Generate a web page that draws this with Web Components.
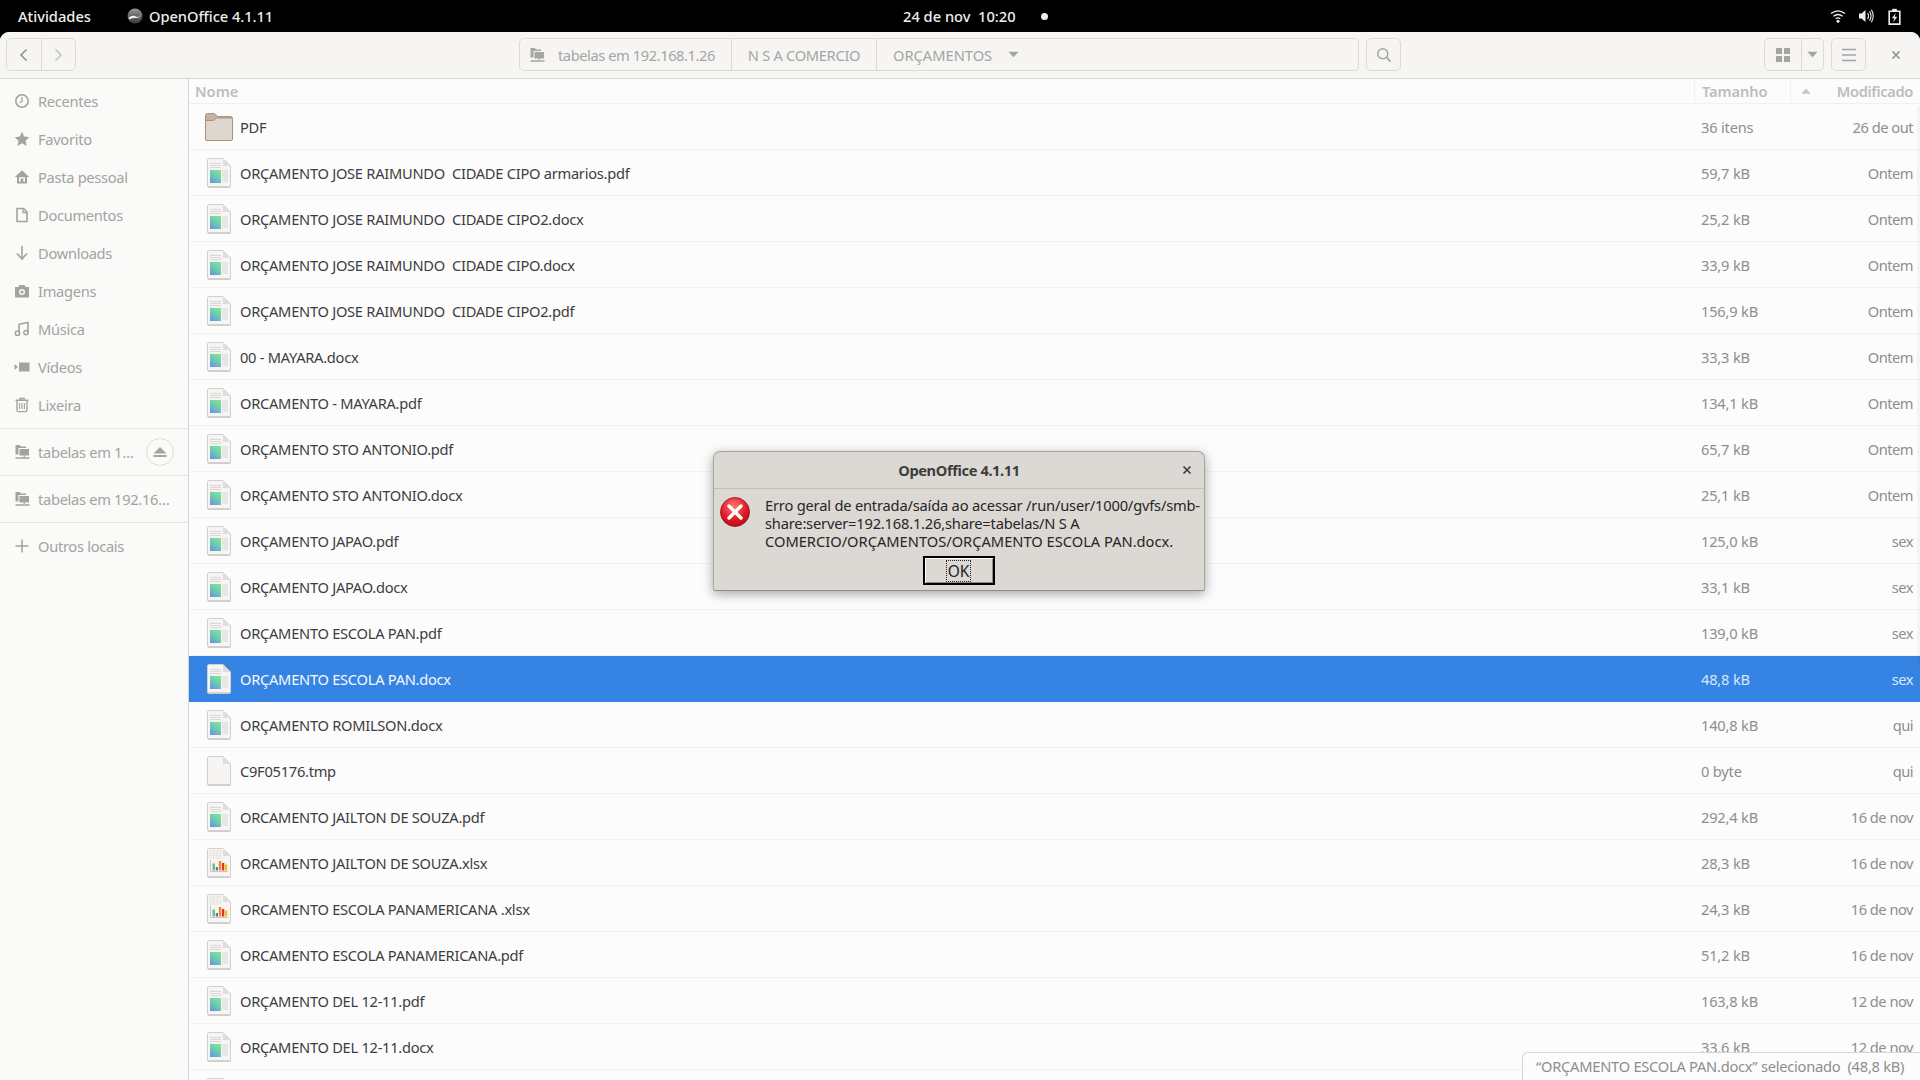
<!DOCTYPE html>
<html lang="pt-BR">
<head>
<meta charset="utf-8">
<title>Arquivos</title>
<style>
  html, body { margin: 0; height: 100%; overflow: hidden; background: #000; }
  body { display: flex; flex-direction: column; font-family: "Noto Sans", "Open Sans", sans-serif; font-size: 14.67px; }
  .tight { letter-spacing: -.19px; }
</style>
</head>
<body>
<top-bar></top-bar>
<files-window>
  <files-header slot="header"></files-header>
  <places-sidebar slot="side"></places-sidebar>
  <file-list slot="main"></file-list>
  <status-pill slot="over">“ORÇAMENTO ESCOLA PAN.docx” selecionado  (48,8 kB)</status-pill>
  <error-dialog slot="over" heading="OpenOffice 4.1.11"><span class="tight">Erro geral de entrada/saída ao acessar /run/user/1000/gvfs/smb-</span><br><span class="tight">share:server=192.168.1.26,share=tabelas/N S A</span><br>COMERCIO/ORÇAMENTOS/ORÇAMENTO ESCOLA PAN.docx.</error-dialog>
</files-window>

<script>
// symbolic icons, 16x16, painted with currentColor
const ICONS = {
  recent: '<circle cx="8" cy="8" r="6.2" fill="none" stroke="currentColor" stroke-width="1.6"/><path d="M8 4v4.4l-2.6 1.4" fill="none" stroke="currentColor" stroke-width="1.3"/>',
  star: '<path d="M8 .8l2.2 4.8 5.2.6-3.9 3.5 1.1 5.2L8 12.3l-4.6 2.6 1.1-5.2L.6 6.2l5.2-.6z" fill="currentColor"/>',
  home: '<path d="M8 1.2L.8 8h2.2v6.5h10V8h2.2zM5 8.2h6v4.6H9.4V9.6H6.6v3.2H5z" fill="currentColor" fill-rule="evenodd"/>',
  doc: '<path d="M3 1.5h6.5l3.5 3.5v9.5H3z" fill="none" stroke="currentColor" stroke-width="1.6"/><path d="M9 1.5v4h4" fill="none" stroke="currentColor" stroke-width="1.3"/>',
  down: '<path d="M8 1v12M3 8.5L8 14l5-5.5" fill="none" stroke="currentColor" stroke-width="1.6"/>',
  camera: '<path d="M1 4h3.4l1-2h5.2l1 2H15v10.5H1zM8 6a3 3 0 100 6 3 3 0 000-6z" fill="currentColor" fill-rule="evenodd"/><circle cx="8" cy="9" r="1.6" fill="currentColor"/>',
  music: '<path d="M5 3.2L14 1.5v10.2" fill="none" stroke="currentColor" stroke-width="1.6"/><path d="M5 3v9" stroke="currentColor" stroke-width="1.6"/><circle cx="3.5" cy="12.2" r="2.2" fill="none" stroke="currentColor" stroke-width="1.5"/><circle cx="12" cy="11.6" r="2.2" fill="none" stroke="currentColor" stroke-width="1.5"/>',
  video: '<path d="M5 3.5h10.5v9H5zM.5 5l3.4 3-3.4 3z" fill="currentColor"/>',
  trash: '<path d="M1.5 3.2h13M3 3.5v9.5q0 1.6 1.6 1.6h6.8q1.6 0 1.6-1.6V3.5M5 1.5h6" fill="none" stroke="currentColor" stroke-width="1.4"/><path d="M5.6 6v6M8 6v6M10.4 6v6" stroke="currentColor" stroke-width="1.1"/>',
  network: '<path d="M1.5 1h4.3l1.2 1.5h5V4H4.5v6.5h-3z" fill="currentColor"/><path d="M5.5 5H15v6.5H5.5z" fill="currentColor"/><path d="M9.6 11.5h1.3V13H9.6zM1.5 13.2h14v1.6h-14z" fill="currentColor"/>',
  plus: '<path d="M8 1.5v13M1.5 8h13" stroke="currentColor" stroke-width="1.5"/>',
  back: '<path d="M10.5 2.5L5 8l5.5 5.5" fill="none" stroke="currentColor" stroke-width="1.5"/>',
  forward: '<path d="M5.5 2.5L11 8l-5.5 5.5" fill="none" stroke="currentColor" stroke-width="1.5"/>',
  search: '<circle cx="6.8" cy="6.8" r="5" fill="none" stroke="currentColor" stroke-width="1.5"/><path d="M10.4 10.4l4.2 4.2" stroke="currentColor" stroke-width="1.7"/>',
  grid: '<path d="M1 1h6v6H1zM9 1h6v6H9zM1 9h6v6H1zM9 9h6v6H9z" fill="currentColor"/>',
  menu: '<path d="M1 2.5h14M1 8h14M1 13.5h14" stroke="currentColor" stroke-width="1.6"/>',
  caret: '<path d="M2.5 5h11L8 11z" fill="currentColor"/>',
  caretUp: '<path d="M2.5 11h11L8 5z" fill="currentColor"/>',
  close: '<path d="M4 4l8 8M12 4l-8 8" stroke="currentColor" stroke-width="1.9"/>',
  eject: '<path d="M8 3l6.5 6.5h-13zM1.5 11h13v2h-13z" fill="currentColor"/>',
  wifi: '<path d="M1 5.6q7-5.4 14 0M3.4 8.2q4.6-3.4 9.2 0M5.7 10.6q2.3-1.5 4.6 0" fill="none" stroke="currentColor" stroke-width="1.3"/><circle cx="8" cy="13.2" r="1.5" fill="currentColor"/>',
  volume: '<path d="M1 5.5h2.5L7.5 2v12l-4-3.5H1z" fill="currentColor"/><path d="M9.7 5q1.6 3 0 6M11.6 3.2q2.8 4.8 0 9.6M13.4 1.8q3.6 6.2 0 12.4" fill="none" stroke="currentColor" stroke-width="1.1"/>',
  battery: '<path d="M3 3h10v12.2H3z" fill="none" stroke="currentColor" stroke-width="1.5"/><path d="M5.8 .8h4.4V3H5.8z" fill="currentColor"/><path d="M9.2 4.6L5.5 9.6h2.3l-1 3.8 3.800-5.200H8.2z" fill="currentColor"/>'
};
const icon = (name, size = 16) =>
  `<svg width="${size}" height="${size}" viewBox="0 0 16 16" aria-hidden="true">${ICONS[name]}</svg>`;

// full colour file thumbnails
const PAGE = `<path d="M1.5.5H16L23.5 8v20a1.5 1.5 0 01-1.5 1.500H2A1.5 1.5 0 01.5 28V2A1.5 1.5 0 011.5.5z" fill="#f6f5f4" stroke="#d3d0ca"/><path d="M1 28.800h22" stroke="#c8c5bf"/><path d="M16 .5L23.5 8H16z" fill="#deddda"/>`;
let gradId = 0;
const fileIcon = (type) => {
  if (type === 'folder') {
    return `<svg width="28" height="28" viewBox="0 0 28 28" aria-hidden="true">
      <path d="M.5 26V2.5A2 2 0 012.5.5h7l3 3h13a2 2 0 012 2V26a1.500 1.500 0 01-1.500 1.500H2A1.500 1.500 0 01.5 26z" fill="#c4b2a2" stroke="#a8917f"/>
      <path d="M.5 7.500h8l3-2.500h14.500a1.500 1.500 0 011.500 1.500V26a1.500 1.500 0 01-1.500 1.500H2A1.500 1.500 0 01.5 26z" fill="#dfd6cd" stroke="#a8917f"/></svg>`;
  }
  if (type === 'sheet') {
    return `<svg width="24" height="30" viewBox="0 0 24 30" aria-hidden="true">${PAGE}
      <path d="M3 2.500h10.500v7.500H3zM3 5h10.500M3 7.500h10.500M6.500 2.500v7.500M10 2.500v7.500" fill="none" stroke="#e2e0dc" stroke-width=".7"/>
      <path d="M3.500 12v11.500H21" fill="none" stroke="#c9c7c2"/>
      <path d="M5.500 15.500h2.500v7H5.500z" fill="#57c98a"/><path d="M8.800 19h2.200v3.500H8.800z" fill="#9b59b6"/><path d="M11.800 13h2.500v9.500h-2.500z" fill="#f08a24"/><path d="M15 15h2.300v7.500H15z" fill="#d9352c"/><path d="M18 16.500h2.200v6H18z" fill="#f5c211"/></svg>`;
  }
  if (type === 'blank') return `<svg width="24" height="30" viewBox="0 0 24 30" aria-hidden="true">${PAGE}</svg>`;
  const id = 'g' + (++gradId);
  return `<svg width="24" height="30" viewBox="0 0 24 30" aria-hidden="true">
    <defs><linearGradient id="${id}" x1=".8" y1="0" x2=".2" y2="1"><stop offset="0" stop-color="#80e596"/><stop offset=".5" stop-color="#6ccbb0"/><stop offset="1" stop-color="#6a94e2"/></linearGradient></defs>
    ${PAGE}
    <path d="M3 5.500h11M3 7.500h11M3 9.500h11M15 13h6M15 15h6M15 17h6M15 19h6M15 21h6M15 23h6" stroke="#d2d0cb" stroke-width=".8"/>
    <rect x="3" y="12" width="11" height="13" fill="url(#${id})"/></svg>`;
};

class TopBar extends HTMLElement {
  constructor() {
    super();
    this.attachShadow({ mode: 'open' }).innerHTML = `
    <style>
      :host { display: flex; flex: none; height: 32px; align-items: center; background: #000; color: #eeeeec; font-weight: 500; font-size: 14.67px; white-space: pre; }
      .act { margin-left: 18px; width: 109px; }
      .logo { width: 16px; height: 16px; margin-right: 6px; }
      .app { width: 754px; letter-spacing: -.05px; }
      .clock { width: 138px; }
      .dot { width: 7px; height: 7px; border-radius: 50%; background: #eeeeec; }
      .tray { margin-left: auto; display: flex; align-items: center; gap: 12px; margin-right: 17px; }
      .tray svg:first-child { margin-right: 1px; transform: translateX(1px); }
    </style>
    <span class="act">Atividades</span>
    <svg class="logo" viewBox="0 0 16 16" aria-hidden="true">
      <defs><linearGradient id="lg" x1="0" y1="0" x2="0" y2="1"><stop offset="0" stop-color="#9a9a9a"/><stop offset=".45" stop-color="#6a6a6a"/><stop offset="1" stop-color="#3c3c3c"/></linearGradient></defs>
      <circle cx="8" cy="8" r="7.500" fill="url(#lg)"/>
      <path d="M1.500 9.500Q6 6.500 9 8.500T14.500 5Q13 10.500 8.500 10T2.500 11.500z" fill="#f2f2f2"/>
    </svg>
    <span class="app">OpenOffice 4.1.11</span>
    <span class="clock">24 de nov  10:20</span><span class="dot"></span>
    <span class="tray">${icon('wifi')}${icon('volume')}${icon('battery', 17)}</span>`;
  }
}

class FilesWindow extends HTMLElement {
  constructor() {
    super();
    this.attachShadow({ mode: 'open' }).innerHTML = `
    <style>
      :host { display: flex; flex-direction: column; flex: 1; min-height: 0; position: relative; background: #fcfcfc; border-radius: 9px 9px 0 0; overflow: hidden; }
      .body { flex: 1; min-height: 0; display: flex; }
    </style>
    <slot name="header"></slot>
    <div class="body"><slot name="side"></slot><slot name="main"></slot></div>
    <slot name="over"></slot>`;
  }
}

class FilesHeader extends HTMLElement {
  constructor() {
    super();
    this.attachShadow({ mode: 'open' }).innerHTML = `
    <style>
      :host { display: flex; flex: none; height: 46px; box-sizing: content-box; align-items: flex-start; background: #f6f5f4; border-bottom: 1px solid #d8d6d2; color: #a5a5a2; font-size: 14.67px; white-space: pre; }
      .box { display: flex; height: 33px; margin-top: 6px; box-sizing: border-box; border: 1px solid #dcdad6; border-radius: 5px; align-items: center; background: #f6f5f4; }
      .box > * { display: flex; flex: 1; align-items: center; justify-content: center; height: 100%; box-sizing: border-box; }
      .box > * + * { border-left: 1px solid #dcdad6; }
      .nav { margin-left: 6px; width: 70px; color: #8f8f8c; }
      .nav .off { color: #c4c4c1; }
      .path { margin-left: 443px; width: 840px; }
      .path > .seg { flex: none; padding: 0 16px; }
      .path > .root { width: 211px; padding: 0 0 0 9px; justify-content: flex-start; gap: 13px; letter-spacing: -.42px; }
      .path > .n2 { width: 145px; letter-spacing: -.3px; }
      .path > .n3 { width: 153px; padding: 0 6px 0 16px; justify-content: flex-start; gap: 14px; }
      .search { margin-left: 7px; width: 35px; }
      .view { margin-left: 363px; width: 60px; }
      .view > span:first-child { flex: none; width: 36px; }
      .menu { margin-left: 7px; width: 35px; }
      .close { width: 46px; margin-left: 7px; height: 33px; margin-top: 6px; display: flex; align-items: center; justify-content: center; color: #8f8f8c; }
    </style>
    <div class="box nav"><span>${icon('back')}</span><span class="off">${icon('forward')}</span></div>
    <div class="box path">
      <span class="seg root">${icon('network')}<span>tabelas em 192.168.1.26</span></span>
      <span class="seg n2">N S A COMERCIO</span>
      <span class="seg n3"><span>ORÇAMENTOS</span>${icon('caret', 15)}</span>
    </div>
    <div class="box search"><span>${icon('search')}</span></div>
    <div class="box view"><span>${icon('grid')}</span><span>${icon('caret', 15)}</span></div>
    <div class="box menu"><span>${icon('menu')}</span></div>
    <div class="close">${icon('close', 14)}</div>`;
  }
}

class PlaceItem extends HTMLElement {
  constructor() {
    super();
    this.attachShadow({ mode: 'open' }).innerHTML = `
    <style>
      :host { display: flex; height: 38px; align-items: center; padding-left: 14px; gap: 8px; color: #a3a3a0; letter-spacing: -.3px; }
      :host([eject]), :host([tall]) { height: 46px; }
      svg { flex: none; }
      .e { margin-left: auto; margin-right: 14px; width: 26px; height: 26px; border: 1px solid #dedcd8; border-radius: 50%; display: flex; align-items: center; justify-content: center; }
    </style>
    ${icon(this.getAttribute('icon'))}<slot></slot>
    ${this.hasAttribute('eject') ? `<span class="e">${icon('eject')}</span>` : ''}`;
  }
}

class PlacesSidebar extends HTMLElement {
  constructor() {
    super();
    this.attachShadow({ mode: 'open' }).innerHTML = `
    <style>
      :host { display: block; flex: none; width: 188px; background: #fafaf9; border-right: 1px solid #d8d6d2; font-size: 14.67px; white-space: nowrap; }
      .top { padding-top: 3px; }
      hr { margin: 0; border: 0; border-top: 1px solid #e4e3e0; }
      .gap { height: 4px; }
    </style>
    <div class="top">
      <place-item icon="recent">Recentes</place-item>
      <place-item icon="star">Favorito</place-item>
      <place-item icon="home">Pasta pessoal</place-item>
      <place-item icon="doc">Documentos</place-item>
      <place-item icon="down">Downloads</place-item>
      <place-item icon="camera">Imagens</place-item>
      <place-item icon="music">Música</place-item>
      <place-item icon="video">Vídeos</place-item>
      <place-item icon="trash">Lixeira</place-item>
    </div>
    <div class="gap"></div>
    <hr><place-item icon="network" eject>tabelas em 1…</place-item>
    <hr><place-item icon="network" tall>tabelas em 192.16…</place-item>
    <hr><place-item icon="plus" tall>Outros locais</place-item>`;
  }
}

class FileRow extends HTMLElement {
  constructor() {
    super();
    this.attachShadow({ mode: 'open' }).innerHTML = `
    <style>
      :host { display: grid; grid-template-columns: 28px 1fr 219px; align-items: center; column-gap: 7px; height: 46px; box-sizing: border-box; padding-left: 16px; border-bottom: 1px solid #f2f2f0; color: #3d3d3d; background: #fcfcfc; white-space: pre; }
      :host([selected]) { background: #3584e4; color: #f6f9fd; border-bottom-color: #3584e4; }
      :host([selected]) .size, :host([selected]) .date { color: #d9e7f9; }
      .ic { display: flex; justify-content: center; height: 30px; align-items: center; }
      .name { letter-spacing: -.27px; }
      .info { display: flex; justify-content: space-between; padding-right: 7px; color: #8e8e8c; }
      .size { letter-spacing: -.2px; }
      .date { letter-spacing: -.5px; }
    </style>
    <span class="ic">${fileIcon(this.getAttribute('type') || 'doc')}</span>
    <span class="name"></span>
    <span class="info"><span class="size"></span><span class="date"></span></span>`;
    const s = this.shadowRoot;
    s.querySelector('.name').textContent = this.getAttribute('name') || '';
    s.querySelector('.size').textContent = this.getAttribute('size') || '';
    s.querySelector('.date').textContent = this.getAttribute('date') || '';
  }
}

const FILES = [
  ['PDF', '36 itens', '26 de out', 'folder'],
  ['ORÇAMENTO JOSE RAIMUNDO  CIDADE CIPO armarios.pdf', '59,7 kB', 'Ontem'],
  ['ORÇAMENTO JOSE RAIMUNDO  CIDADE CIPO2.docx', '25,2 kB', 'Ontem'],
  ['ORÇAMENTO JOSE RAIMUNDO  CIDADE CIPO.docx', '33,9 kB', 'Ontem'],
  ['ORÇAMENTO JOSE RAIMUNDO  CIDADE CIPO2.pdf', '156,9 kB', 'Ontem'],
  ['00 - MAYARA.docx', '33,3 kB', 'Ontem'],
  ['ORCAMENTO - MAYARA.pdf', '134,1 kB', 'Ontem'],
  ['ORÇAMENTO STO ANTONIO.pdf', '65,7 kB', 'Ontem'],
  ['ORÇAMENTO STO ANTONIO.docx', '25,1 kB', 'Ontem'],
  ['ORÇAMENTO JAPAO.pdf', '125,0 kB', 'sex'],
  ['ORÇAMENTO JAPAO.docx', '33,1 kB', 'sex'],
  ['ORÇAMENTO ESCOLA PAN.pdf', '139,0 kB', 'sex'],
  ['ORÇAMENTO ESCOLA PAN.docx', '48,8 kB', 'sex', 'doc', true],
  ['ORÇAMENTO ROMILSON.docx', '140,8 kB', 'qui'],
  ['C9F05176.tmp', '0 byte', 'qui', 'blank'],
  ['ORCAMENTO JAILTON DE SOUZA.pdf', '292,4 kB', '16 de nov'],
  ['ORCAMENTO JAILTON DE SOUZA.xlsx', '28,3 kB', '16 de nov', 'sheet'],
  ['ORCAMENTO ESCOLA PANAMERICANA .xlsx', '24,3 kB', '16 de nov', 'sheet'],
  ['ORCAMENTO ESCOLA PANAMERICANA.pdf', '51,2 kB', '16 de nov'],
  ['ORÇAMENTO DEL 12-11.pdf', '163,8 kB', '12 de nov'],
  ['ORÇAMENTO DEL 12-11.docx', '33,6 kB', '12 de nov'],
  ['', '', '']
];

class FileList extends HTMLElement {
  constructor() {
    super();
    const rows = FILES.map(([n, s, d, t, sel]) =>
      `<file-row name="${n}" size="${s}" date="${d}" type="${t || 'doc'}"${sel ? ' selected' : ''}></file-row>`).join('');
    this.attachShadow({ mode: 'open' }).innerHTML = `
    <style>
      :host { display: block; position: relative; flex: 1; min-width: 0; overflow: hidden; background: #fcfcfc; font-size: 14.67px; }
      .cols { display: grid; grid-template-columns: 1fr 96px 30px 100px; height: 25px; box-sizing: border-box; border-bottom: 1px solid #f0f0ee; color: #bdbdba; font-weight: 600; align-items: center; }
      .cols > * { height: 100%; display: flex; align-items: center; box-sizing: border-box; }
      .nm { padding-left: 6px; }
      .sz { padding-left: 7px; border-left: 1px solid #f0f0ee; letter-spacing: -.1px; }
      .ar { justify-content: center; border-left: 1px solid #f0f0ee; color: #c6c6c3; }
      .md { justify-content: flex-end; padding-right: 7px; letter-spacing: -.35px; }
      .thumb { position: absolute; right: 0; top: 27px; width: 3px; height: 560px; background: rgba(0,0,0,.03); }
    </style>
    <div class="cols"><span class="nm">Nome</span><span class="sz">Tamanho</span><span class="ar">${icon('caretUp', 14)}</span><span class="md">Modificado</span></div>
    ${rows}
    <div class="thumb"></div>`;
  }
}

class StatusPill extends HTMLElement {
  constructor() {
    super();
    this.attachShadow({ mode: 'open' }).innerHTML = `
    <style>
      :host { position: absolute; right: 0; bottom: 0; left: 1522px; height: 28px; box-sizing: border-box; display: flex; align-items: center; padding: 0 0 2px 13px; background: #fcfcfc; border: 1px solid #d8d6d2; border-width: 1px 0 0 1px; border-radius: 6px 0 0 0; color: #8e8e8c; font-size: 14.67px; letter-spacing: -.25px; white-space: pre; }
    </style><slot></slot>`;
  }
}

class ErrorDialog extends HTMLElement {
  constructor() {
    super();
    this.attachShadow({ mode: 'open' }).innerHTML = `
    <style>
      :host { position: absolute; left: 713px; top: 419px; width: 492px; height: 140px; box-sizing: border-box; display: flex; flex-direction: column; background: #dcd8d3; border: 1px solid #a8a49e; border-bottom-color: #8f8b85; border-radius: 7px 7px 2px 2px; box-shadow: 0 3px 12px rgba(0,0,0,.35); color: #2e3436; font-size: 14.67px; }
      .title { height: 36px; flex: none; display: flex; align-items: center; justify-content: center; position: relative; border-bottom: 1px solid #c6bfb7; font-weight: 700; letter-spacing: -.4px; color: #3d3d3d; }
      .title svg { position: absolute; right: 10px; top: 11px; }
      .msg { display: flex; padding: 7px 5px 0 6px; }
      .err { flex: none; width: 30px; height: 30px; margin: 1px 15px 0 0; }
      .txt { line-height: 18px; white-space: nowrap; color: #262626; }
      .ok { align-self: center; margin: 6px 1px 0 0; width: 72px; height: 29px; box-sizing: border-box; border: 2px solid #000; background: #dcd8d3; box-shadow: inset 1px 1px 0 #fff, inset -1px -1px 0 #8f8b85; display: flex; align-items: center; justify-content: center; color: #222; font-size: 15.5px; }
      .ok span { border: 1px dotted #222; padding: 0 1px; line-height: 20px; }
    </style>
    <div class="title">${this.getAttribute('heading')}${icon('close', 14)}</div>
    <div class="msg">
      <svg class="err" viewBox="0 0 30 30" aria-hidden="true">
        <defs><radialGradient id="r" cx=".45" cy=".3" r=".8"><stop offset="0" stop-color="#f77"/><stop offset=".55" stop-color="#e01b24"/><stop offset="1" stop-color="#a50d12"/></radialGradient></defs>
        <circle cx="15" cy="15" r="14.500" fill="url(#r)" stroke="#9c1014" stroke-width=".8"/>
        <path d="M9 9l12 12M21 9L9 21" stroke="#fff" stroke-width="3.400" stroke-linecap="round"/>
      </svg>
      <div class="txt"><slot></slot></div>
    </div>
    <div class="ok"><span>OK</span></div>`;
  }
}

customElements.define('top-bar', TopBar);
customElements.define('files-window', FilesWindow);
customElements.define('files-header', FilesHeader);
customElements.define('place-item', PlaceItem);
customElements.define('places-sidebar', PlacesSidebar);
customElements.define('file-row', FileRow);
customElements.define('file-list', FileList);
customElements.define('status-pill', StatusPill);
customElements.define('error-dialog', ErrorDialog);
</script>
</body>
</html>
